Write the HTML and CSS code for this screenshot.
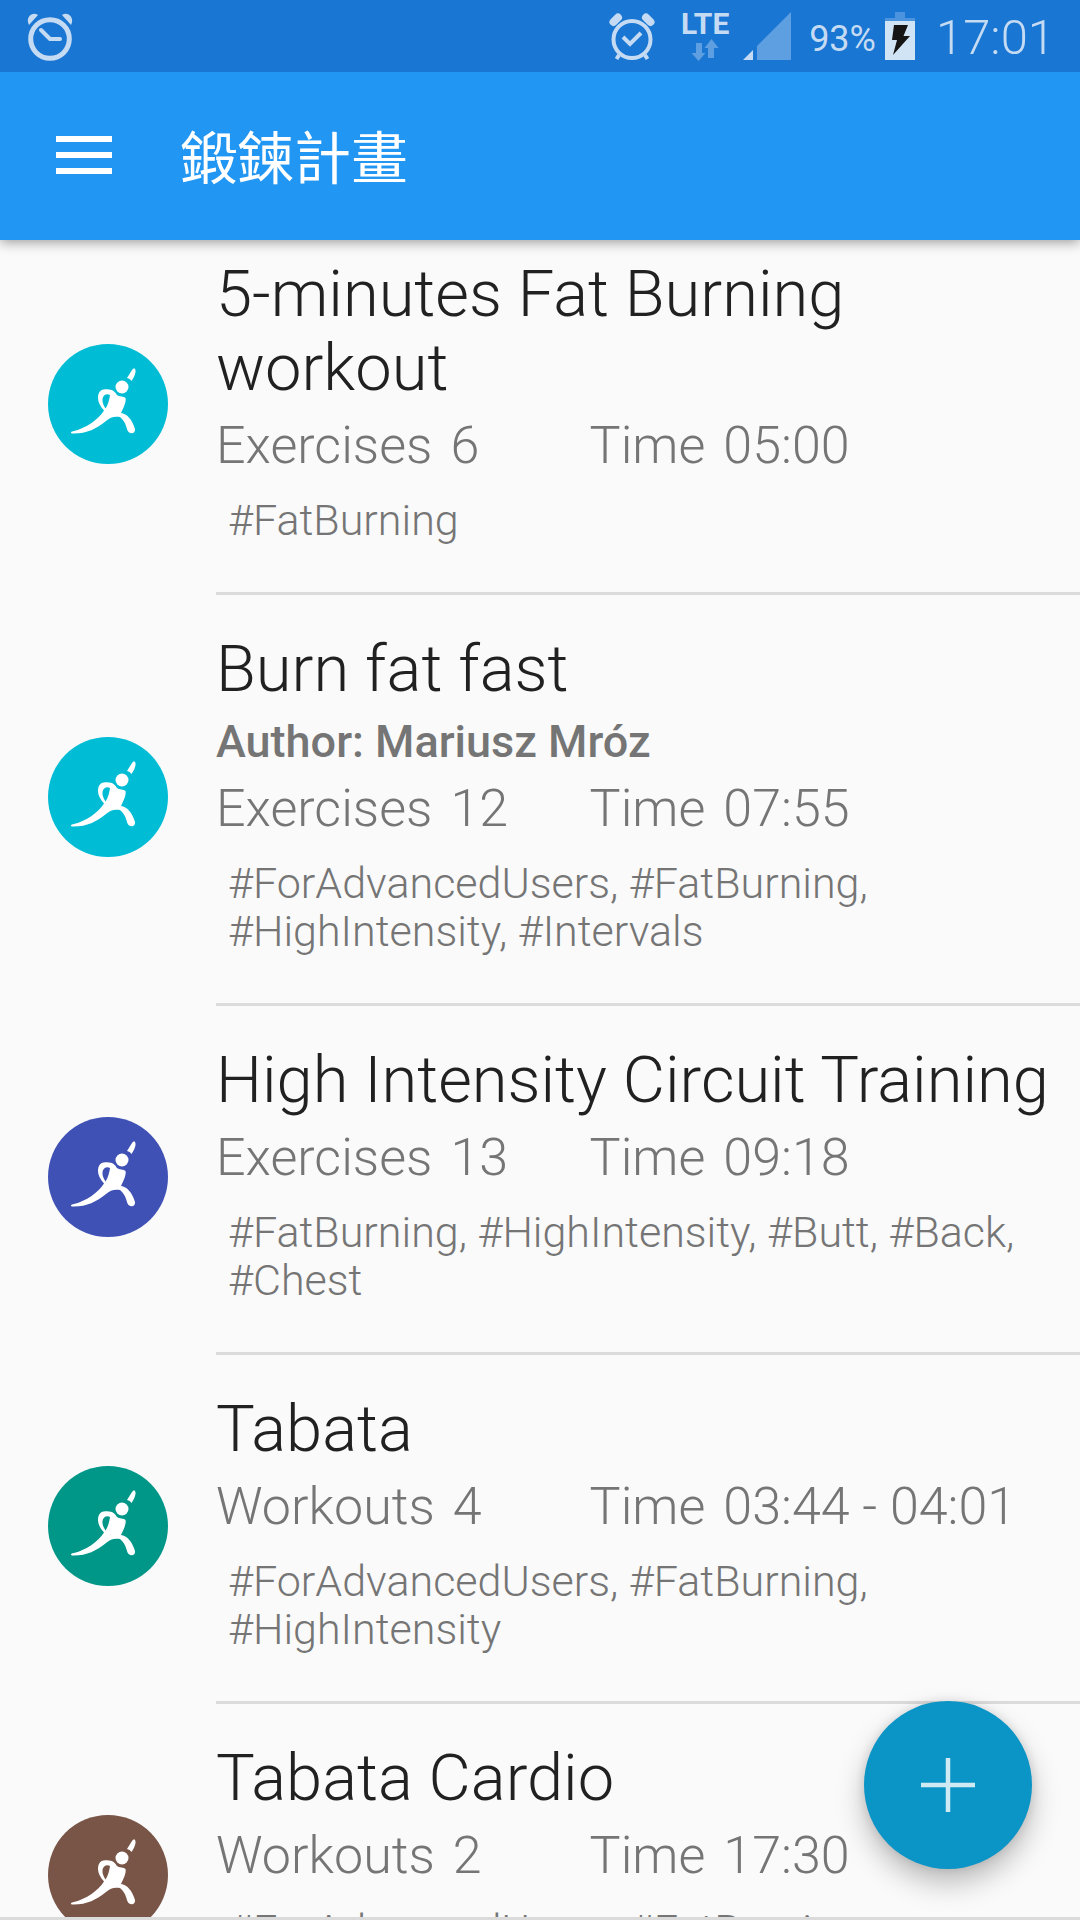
FILE: index.html
```html
<!DOCTYPE html>
<html lang="zh-Hant">
<head>
<meta charset="utf-8">
<meta name="viewport" content="width=device-width, initial-scale=1">
<title>鍛鍊計畫</title>
<link rel="stylesheet" href="styles.css">
</head>
<body>
<svg class="defs" aria-hidden="true">
  <symbol id="runner" viewBox="0 0 120 120">
    <circle cx="74" cy="43" r="6.500"/>
    <path d="M79 34L84 26Q87 22 87.600 27Q87.500 31 83.500 37Q82 34.500 79 34Z"/>
    <path fill-rule="evenodd" d="M56 66.500C52 62 50 58 50 54C50 48 53 45 58 45.300C65 45 67 48 69 51C71 53 76 52 77.500 54C78.500 57 76 63 73 69C79 70 84 75 87 85C87.500 89 84 90.500 80.500 88C78 85 79 79 72 73C67 72 62 73 58 77C48 85 38 90 24 89.500C22 88.500 23 87.500 26 87C38 84 50 76 56 66.500ZM57.500 64.500C60 61 61.500 55 62 51C59 49 55 51 54.500 55C54 59 56 62 57.500 64.500Z"/>
  </symbol>
</svg>

<header class="top">
  <div class="status">
    <svg class="status-alarm" width="48" height="50" viewBox="0 0 48 50" aria-hidden="true">
      <circle cx="24" cy="27" r="19.300" fill="none" stroke="currentColor" stroke-width="5"/>
      <path d="M3 13C-1 6 6-1 12 3Z M45 13C49 6 42-1 36 3Z" fill="currentColor"/>
      <path d="M15 18L24 27H34" fill="none" stroke="currentColor" stroke-width="4" stroke-linecap="round" stroke-linejoin="round"/>
    </svg>
    <div class="status-right">
      <svg class="status-check" width="46" height="48" viewBox="0 0 46 48" aria-hidden="true">
        <circle cx="23" cy="26.500" r="18.500" fill="none" stroke="currentColor" stroke-width="4"/>
        <path d="M4.500 9L9 4.500M41.500 9L37 4.500" stroke="currentColor" stroke-width="8" stroke-linecap="round"/>
        <path d="M10 42L7.500 46M36 42L38.500 46" stroke="currentColor" stroke-width="4"/>
        <path d="M14 24L21 31L32 20" fill="none" stroke="currentColor" stroke-width="4"/>
      </svg>
      <div class="network">
        <span class="lte">LTE</span>
        <svg width="28" height="24" viewBox="0 0 28 24" aria-hidden="true"><path d="M5 5H11V15H14.500L7.500 23L0.500 15H5Z M17 20V10H13.500L20.500 1L27.500 10H23V20Z" fill="#5e9fe1"/></svg>
      </div>
      <svg class="signal" width="48" height="48" viewBox="0 0 48 48" aria-hidden="true"><path d="M14 48V34L48 0V48Z" fill="#5e9fe1"/><path d="M0 48L10 38V48Z" fill="currentColor"/></svg>
      <span class="percent">93%</span>
      <svg class="battery" width="30" height="48" viewBox="0 0 30 48" aria-hidden="true"><path d="M10 0H20V6H30V9H0V6H10Z" fill="#4b93dd"/><path d="M0 9H30V48H0Z" fill="#d1e4f6"/><path d="M9 13H23L18.500 24H25L8 43L12 28H7Z" fill="#151515"/></svg>
      <time class="clock">17:01</time>
    </div>
  </div>
  <div class="appbar">
    <button class="menu" type="button" aria-label="Menu"><svg width="56" height="38" viewBox="0 0 56 38" aria-hidden="true"><path d="M0 0H56V6H0Z M0 16H56V22H0Z M0 32H56V38H0Z" fill="#fff"/></svg></button>
    <h1 class="appbar-title">鍛鍊計畫</h1>
  </div>
</header>

<main class="viewport">
  <ul class="plans">
    <li class="plan">
      <svg class="avatar avatar-cyan" aria-hidden="true"><use href="#runner"/></svg>
      <div class="plan-body">
        <h2 class="plan-title">5-minutes Fat Burning workout</h2>
        <div class="meta"><p class="stat"><span>Exercises</span><span>6</span></p><p class="stat"><span>Time</span><span>05:00</span></p></div>
        <p class="tags">#FatBurning</p>
      </div>
    </li>
    <li class="plan">
      <svg class="avatar avatar-cyan" aria-hidden="true"><use href="#runner"/></svg>
      <div class="plan-body">
        <h2 class="plan-title">Burn fat fast</h2>
        <p class="author">Author: Mariusz Mróz</p>
        <div class="meta"><p class="stat"><span>Exercises</span><span>12</span></p><p class="stat"><span>Time</span><span>07:55</span></p></div>
        <p class="tags">#ForAdvancedUsers, #FatBurning, #HighIntensity, #Intervals</p>
      </div>
    </li>
    <li class="plan">
      <svg class="avatar avatar-indigo" aria-hidden="true"><use href="#runner"/></svg>
      <div class="plan-body">
        <h2 class="plan-title">High Intensity Circuit Training</h2>
        <div class="meta"><p class="stat"><span>Exercises</span><span>13</span></p><p class="stat"><span>Time</span><span>09:18</span></p></div>
        <p class="tags">#FatBurning, #HighIntensity, #Butt, #Back, #Chest</p>
      </div>
    </li>
    <li class="plan">
      <svg class="avatar avatar-teal" aria-hidden="true"><use href="#runner"/></svg>
      <div class="plan-body">
        <h2 class="plan-title">Tabata</h2>
        <div class="meta"><p class="stat"><span>Workouts</span><span>4</span></p><p class="stat"><span>Time</span><span>03:44 - 04:01</span></p></div>
        <p class="tags">#ForAdvancedUsers, #FatBurning, #HighIntensity</p>
      </div>
    </li>
    <li class="plan">
      <svg class="avatar avatar-brown" aria-hidden="true"><use href="#runner"/></svg>
      <div class="plan-body">
        <h2 class="plan-title">Tabata Cardio</h2>
        <div class="meta"><p class="stat"><span>Workouts</span><span>2</span></p><p class="stat"><span>Time</span><span>17:30</span></p></div>
        <p class="tags">#ForAdvancedUsers, #FatBurning, #HighIntensity</p>
      </div>
    </li>
  </ul>
</main>
<button class="fab" type="button" aria-label="Add"><svg width="54" height="54" viewBox="0 0 54 54" aria-hidden="true"><path d="M27 0V54M0 27H54" stroke="#d0eaf4" stroke-width="4.500"/></svg></button>
</body>
</html>
```
FILE: styles.css
```css
* { box-sizing: border-box; }

body {
  margin: 0;
  height: 100vh;
  display: flex;
  flex-direction: column;
  background: #fafafa;
  color: #757575;
  font-family: Roboto, "Noto Sans CJK TC", sans-serif;
  font-weight: 300;
}

h1, h2, p, ul { margin: 0; padding: 0; }
ul { list-style: none; }
button { border: 0; padding: 0; cursor: pointer; }
svg { display: block; flex: none; }
.defs { position: absolute; width: 0; height: 0; }

.top {
  position: relative;
  z-index: 1;
  flex: none;
  box-shadow: 0 2px 12px rgba(0, 0, 0, 0.4);
}

.status {
  display: flex;
  justify-content: space-between;
  height: 72px;
  padding: 12px 25px 0 26px;
  background: #1976d2;
  color: #c5dbf3;
}

.status-right { display: flex; }
.status-check { margin-top: 1px; }
.network {
  display: flex;
  flex-direction: column;
  align-items: center;
  gap: 2px;
  width: 60px;
  margin: 0 8px 0 20px;
}
.lte {
  font: 700 30px/24px Roboto, sans-serif;
}
.percent {
  margin-left: 18px;
  font-size: 36px;
  font-weight: 400;
  line-height: 54px;
}
.battery { margin-left: 9px; }
.clock {
  margin-left: 21px;
  font-size: 49px;
  line-height: 52px;
}

.appbar {
  display: flex;
  align-items: center;
  gap: 68px;
  height: 168px;
  padding: 0 56px 3px;
  background: #2196f3;
}
.menu { background: none; }
.appbar-title {
  padding-bottom: 2px;
  color: #fff;
  font-family: "Noto Sans CJK TC", sans-serif;
  font-size: 57px;
  font-weight: 400;
  line-height: 84px;
}

.viewport {
  flex: 1;
  min-height: 0;
  overflow: hidden;
  border-bottom: 3px solid #dbdbdb;
}

/* The list is scrolled a little, so its first row starts under the bar. */
.plans { margin-top: -20px; }

.plan {
  display: flex;
  align-items: center;
  gap: 48px;
  padding-left: 48px;
}
.avatar {
  width: 120px;
  height: 120px;
  margin-bottom: 8px;
  border-radius: 50%;
  fill: #fff;
}
.avatar-cyan { background: #00bcd4; }
.avatar-indigo { background: #3f51b5; }
.avatar-teal { background: #009688; }
.avatar-brown { background: #795548; }

.plan-body {
  flex: 1;
  padding: 37px 0 48px;
  border-bottom: 3px solid #dbdbdb;
}
.plan-title {
  padding-right: 12px;
  color: #212121;
  font-size: 65px;
  font-weight: 300;
  line-height: 74px;
}
.author {
  padding-top: 9px;
  font-size: 45px;
  font-weight: 500;
  line-height: 53px;
}
.meta {
  display: grid;
  grid-template-columns: 16fr 21fr;
  padding-top: 10px;
  font-size: 52px;
  line-height: 62px;
}
.stat {
  display: flex;
  gap: 18px;
}
.tags {
  padding: 19px 12px 0;
  font-size: 43px;
  line-height: 48px;
}

.fab {
  position: fixed;
  right: 48px;
  bottom: 51px;
  display: grid;
  place-items: center;
  width: 168px;
  height: 168px;
  border-radius: 50%;
  background: #0b94c6;
  box-shadow: 0 14px 28px rgba(0, 0, 0, 0.25), 0 0 12px rgba(0, 0, 0, 0.12);
}
```
